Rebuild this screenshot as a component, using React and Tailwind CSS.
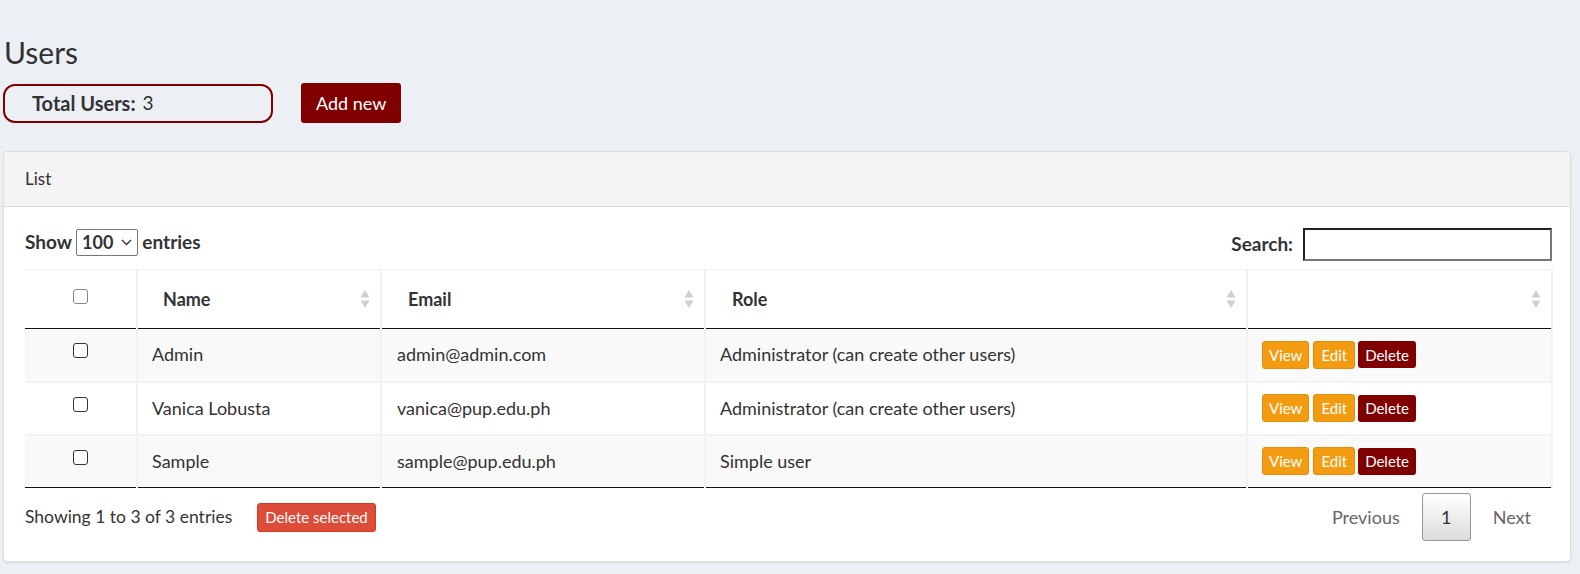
import React from 'react';

const users = [
  { name: 'Admin', email: 'admin@admin.com', role: 'Administrator (can create other users)' },
  { name: 'Vanica Lobusta', email: 'vanica@pup.edu.ph', role: 'Administrator (can create other users)' },
  { name: 'Sample', email: 'sample@pup.edu.ph', role: 'Simple user' },
];

function SortIcon() {
  return (
    <svg className="absolute right-[10px] top-1/2 -translate-y-1/2" width="10" height="20" viewBox="0 0 10 20">
      <path d="M5 1 L9.5 8.5 L0.5 8.5 Z" fill="#cfcfcf" />
      <path d="M5 19 L9.5 11.5 L0.5 11.5 Z" fill="#cfcfcf" />
    </svg>
  );
}

function Box({ color = 'border-[#333]' }) {
  return <span className={`inline-block w-[15px] h-[15px] rounded-[3px] border bg-white ${color}`} />;
}

export default function App() {
  return (
    <div className="min-h-screen bg-[#ecf0f5] font-['Lato','Liberation_Sans',sans-serif] text-[18px] text-[#333] pt-[33px]">
      <h1 className="pl-[4px] text-[30px] leading-[38px] font-normal text-[#333]">Users</h1>

      <div className="flex items-center gap-[28px] mt-[12px] pl-[3px]">
        <div className="w-[270px] h-[39px] rounded-[12px] border-2 border-[#800000] flex items-center pl-[27px] text-[20px]">
          <span className="font-bold">Total Users:</span>
          <span className="ml-[7px] text-[19px]">3</span>
        </div>
        <button className="h-[40px] px-[15px] rounded-[3px] bg-[#800000] text-white text-[18px]">Add new</button>
      </div>

      <div className="ml-[3px] mr-[9px] mt-[28px] bg-white rounded-[4px] border border-[#dcdcdc] shadow-[0_1px_2px_rgba(0,0,0,0.08)]">
        <div className="h-[55px] bg-[#f4f4f4] border-b border-[#ddd] rounded-t-[4px] flex items-center pl-[21px] text-[17px]">
          List
        </div>

        <div className="pl-[21px] pr-[18px] pt-[21px] pb-[20px]">
          <div className="flex items-start justify-between h-[41px]">
            <div className="flex items-center gap-[4px] font-bold text-[19px]">
              <span>Show</span>
              <div className="flex items-center gap-[8px] h-[27px] px-[5px] border border-[#777] rounded-[2px] bg-white text-[18px]">
                <span>100</span>
                <svg width="11" height="7" viewBox="0 0 11 7">
                  <path d="M1 1 L5.5 5.5 L10 1" fill="none" stroke="#333" strokeWidth="1.4" />
                </svg>
              </div>
              <span>entries</span>
            </div>
            <div className="flex items-center gap-[10px] font-bold text-[19px]">
              <span>Search:</span>
              <div className="w-[249px] h-[33px] border-2 border-t-[#222] border-l-[#222] border-b-[#777] border-r-[#777] bg-white" />
            </div>
          </div>

          <table className="w-[1527px] border-collapse table-fixed">
            <colgroup>
              <col className="w-[112px]" />
              <col className="w-[244px]" />
              <col className="w-[324px]" />
              <col className="w-[542px]" />
              <col className="w-[305px]" />
            </colgroup>
            <thead>
              <tr className="h-[59px] border-t border-[#f0f0f0] border-b border-b-[#111]">
                <th className="text-center align-middle pb-[4px] border-r-2 border-[#f0f0f0]">
                  <Box color="border-[#888]" />
                </th>
                <th className="relative text-left font-bold pl-[25px] border-r-2 border-[#f0f0f0]">Name<SortIcon /></th>
                <th className="relative text-left font-bold pl-[26px] border-r-2 border-[#f0f0f0]">Email<SortIcon /></th>
                <th className="relative text-left font-bold pl-[26px] border-r-2 border-[#f0f0f0]">Role<SortIcon /></th>
                <th className="relative border-r-2 border-[#f0f0f0]"><SortIcon /></th>
              </tr>
            </thead>
            <tbody>
              {users.map((u, i) => (
                <tr key={u.email} className={`h-[53px] ${i % 2 === 0 ? 'bg-[#f9f9f9]' : 'bg-white'} ${i < 2 ? 'border-b-2 border-[#f2f2f2]' : 'border-b border-[#111]'}`}>
                  <td className="text-center align-middle pb-[6px] border-r-2 border-[#f2f2f2]"><Box /></td>
                  <td className="pl-[14px] border-r-2 border-[#f2f2f2]">{u.name}</td>
                  <td className="pl-[15px] border-r-2 border-[#f2f2f2]">{u.email}</td>
                  <td className="pl-[14px] border-r-2 border-[#f2f2f2]">{u.role}</td>
                  <td className="pl-[14px] border-r-2 border-[#f2f2f2]">
                    <div className="flex items-center gap-[4px] text-[15px] text-white">
                      <span className="h-[28px] px-[6px] flex items-center rounded-[3px] bg-[#f39c12] border border-[#e08e0b]">View</span>
                      <span className="h-[28px] px-[7px] flex items-center rounded-[3px] bg-[#f39c12] border border-[#e08e0b]">Edit</span>
                      <span className="h-[27px] px-[7px] flex items-center rounded-[3px] bg-[#800000] -ml-[1px]">Delete</span>
                    </div>
                  </td>
                </tr>
              ))}
            </tbody>
          </table>

          <div className="flex items-center justify-between mt-[5px]">
            <div className="flex items-center">
              <span className="text-[17.5px]">Showing 1 to 3 of 3 entries</span>
              <span className="ml-[25px] h-[29px] px-[7px] flex items-center rounded-[3px] bg-[#dd4b39] border border-[#d73925] text-white text-[15px]">Delete selected</span>
            </div>
            <div className="flex items-center mr-[9px] text-[18px]">
              <span className="text-[#666] px-[12px]">Previous</span>
              <span className="mx-[10px] w-[49px] h-[48px] flex items-center justify-center rounded-[3px] border border-[#979797] bg-gradient-to-b from-white to-[#dcdcdc] text-[#333]">1</span>
              <span className="text-[#666] px-[12px]">Next</span>
            </div>
          </div>
        </div>
      </div>
    </div>
  );
}
